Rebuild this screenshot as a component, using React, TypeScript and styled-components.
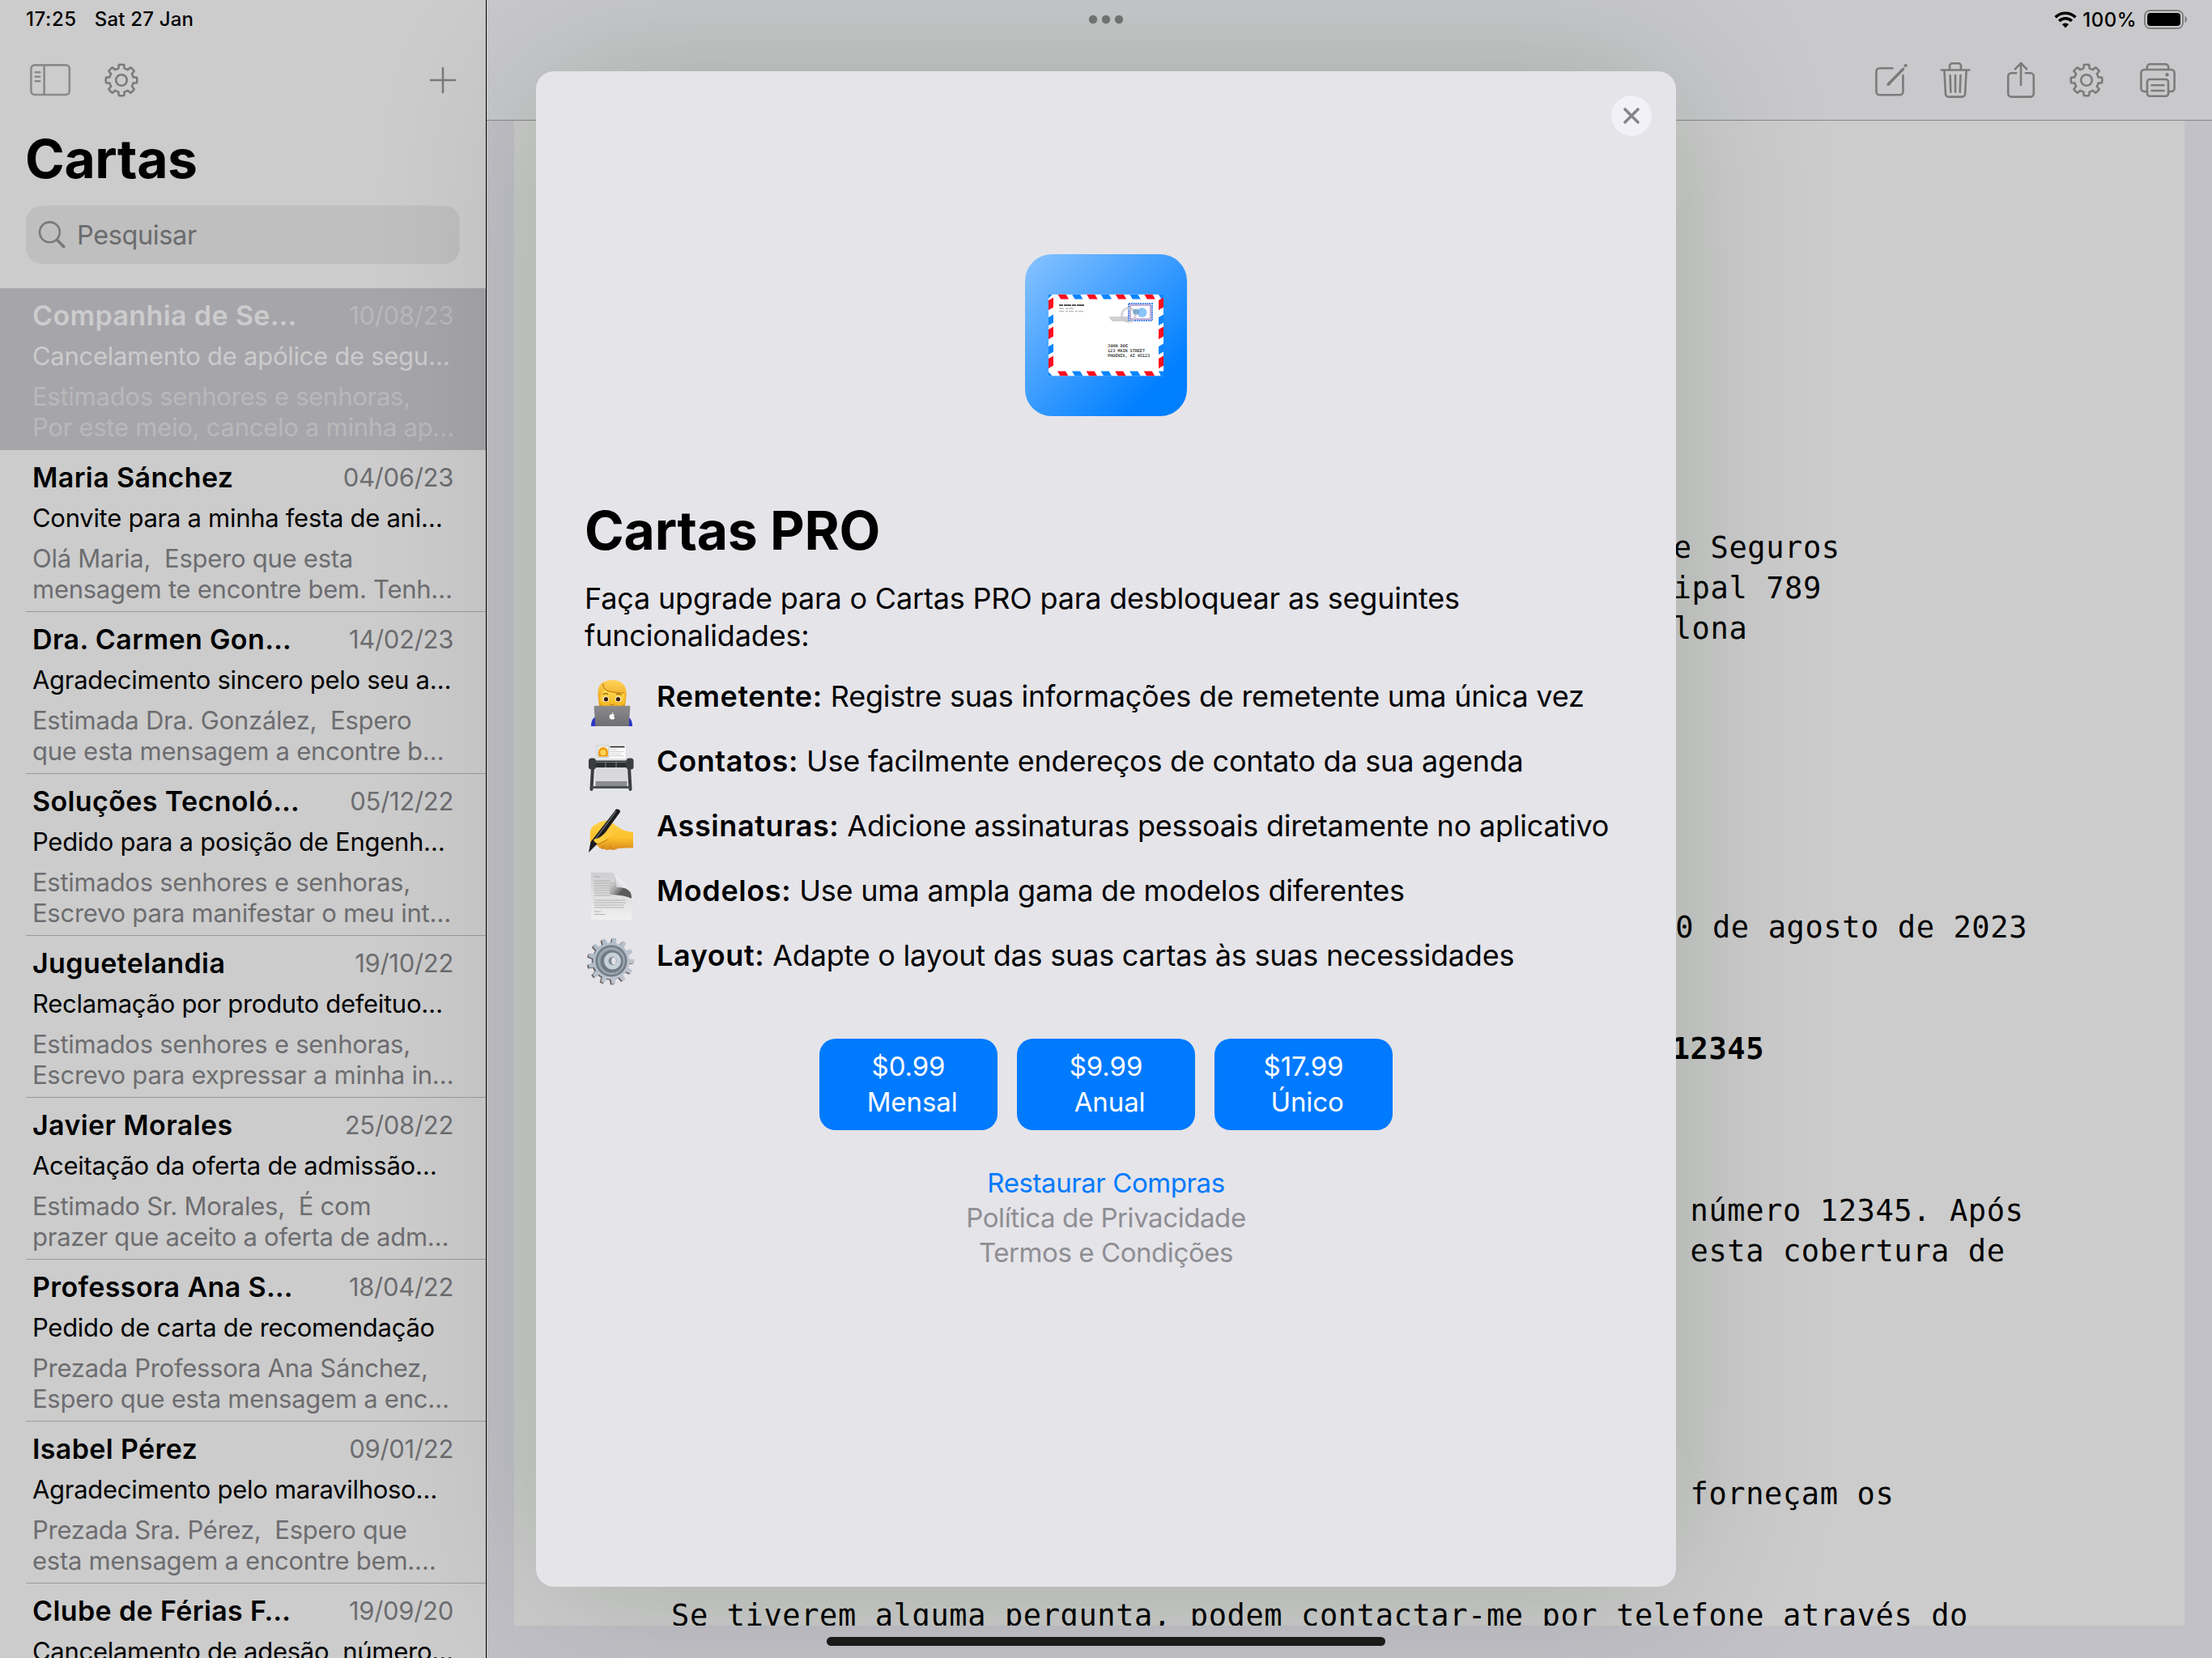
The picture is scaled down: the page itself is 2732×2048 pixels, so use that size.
import React from "react";
import styled, { createGlobalStyle } from "styled-components";

const SANS = `Inter, "Liberation Sans", sans-serif`;
const MONO = `"DejaVu Sans Mono", "Liberation Mono", monospace`;

const Global = createGlobalStyle`
  * { box-sizing: border-box; }
  html, body { margin: 0; padding: 0; background: #ccc; }
  body { font-family: ${SANS}; color: #000; }
  button { font: inherit; border: 0; margin: 0; }
`;

const Screen = styled.div`
  position: relative;
  width: 2732px;
  height: 2048px;
  display: grid;
  grid-template-columns: 600px 1px 1fr;
  overflow: hidden;
`;

/* ---------- sidebar ---------- */

const Sidebar = styled.aside`
  display: flex;
  flex-direction: column;
  height: 2048px;
  overflow: hidden;
  background: #ccc;
`;

const Divider = styled.div`
  background: #000;
`;

const StatusLeft = styled.div`
  display: flex;
  flex: none;
  gap: 22px;
  height: 48px;
  padding-left: 32px;
  font-size: 24px;
  font-weight: 500;
  line-height: 48px;
  letter-spacing: 0.2px;
  white-space: pre;
`;

const Clock = styled.span`
  letter-spacing: 0.6px;
`;

const SideTools = styled.div`
  display: flex;
  flex: none;
  align-items: center;
  height: 101px;
  padding: 0 36px 0 36px;
`;

const Spacer = styled.div`
  flex: 1;
`;

const SideTitle = styled.h1`
  flex: none;
  margin: 0;
  height: 94px;
  padding-left: 31px;
  font-size: 66px;
  font-weight: 700;
  line-height: 94px;
  letter-spacing: -0.4px;
`;

const Search = styled.div`
  display: flex;
  align-items: center;
  gap: 13px;
  flex: none;
  height: 72px;
  margin: 11px 32px 30px;
  padding-left: 14px;
  border-radius: 20px;
  background: #bfbfbf;
  color: #6b6b6d;
  font-size: 32.5px;
  letter-spacing: -0.4px;
`;

const Row = styled.div<{ $selected?: boolean }>`
  flex: none;
  height: 200px;
  padding-left: 32px;
  background: ${(p) => (p.$selected ? "#a6a5aa" : "transparent")};
  --main: ${(p) => (p.$selected ? "#cccccc" : "#000")};
  --dim: ${(p) => (p.$selected ? "#b9b8bb" : "#6d6d70")};
  --line: ${(p) => (p.$selected ? "transparent" : "#9b9b9c")};
`;

const RowBody = styled.div`
  height: 200px;
  padding: 14px 40px 0 8px;
  border-bottom: 1px solid var(--line);
  white-space: pre;
`;

const RowHead = styled.div`
  display: flex;
  justify-content: space-between;
  line-height: 40px;
`;

const Name = styled.div`
  color: var(--main);
  font-size: 34px;
  font-weight: 600;
  letter-spacing: 0.38px;
`;

const DateText = styled.div`
  color: var(--dim);
  font-size: 31px;
  letter-spacing: -0.3px;
`;

const Subject = styled.div`
  margin-top: 10px;
  color: var(--main);
  font-size: 31px;
  line-height: 40px;
  letter-spacing: -0.28px;
`;

const Preview = styled.div`
  margin-top: 11px;
  color: var(--dim);
  font-size: 31px;
  line-height: 38px;
  letter-spacing: -0.26px;
`;

/* ---------- detail ---------- */

const Detail = styled.main`
  display: flex;
  flex-direction: column;
  height: 2048px;
  background: #c2c1c8;
`;

const Header = styled.header`
  flex: none;
  height: 149px;
  border-bottom: 1px solid #868888;
  background: #c9c9cb;
`;

const StatusRight = styled.div`
  display: flex;
  align-items: center;
  height: 48px;
  padding: 0 30px 0 743px;
  font-size: 24px;
  font-weight: 500;
`;

const Percent = styled.span`
  margin: 0 9px 0 7px;
  letter-spacing: 0.5px;
`;

const DetailTools = styled.div`
  display: flex;
  align-items: center;
  justify-content: flex-end;
  height: 101px;
  padding-right: 44px;
`;

const Page = styled.article`
  flex: none;
  height: 1859px;
  margin: 0 34px;
  padding: 503px 0 0 194px;
  overflow: hidden;
  background: #ccc;
  font-family: ${MONO};
  font-size: 37px;
  line-height: 50px;
  letter-spacing: 0.609px;
  white-space: pre;
`;

const Line = styled.div<{ $left?: number; $top?: number; $bold?: boolean }>`
  height: 50px;
  margin-top: ${(p) => p.$top ?? 0}px;
  padding-left: ${(p) => p.$left ?? 0}px;
  font-weight: ${(p) => (p.$bold ? 700 : 400)};
`;

/* ---------- modal ---------- */

const Modal = styled.section`
  position: absolute;
  left: 662px;
  top: 88px;
  width: 1408px;
  height: 1872px;
  display: flex;
  flex-direction: column;
  padding: 0 60px;
  border-radius: 22px;
  background: #e5e4e9;
  box-shadow: 0 0 200px rgba(2, 32, 0, 0.18);
`;

const Close = styled.button`
  position: absolute;
  right: 30px;
  top: 30px;
  display: grid;
  place-items: center;
  width: 50px;
  height: 50px;
  padding: 0;
  border-radius: 50%;
  background: #f2f1f7;
`;

const LogoBox = styled.div`
  display: flex;
  justify-content: center;
  margin: 226px 0 101px;
  height: 200px;
`;

const ModalTitle = styled.h2`
  margin: 0;
  font-size: 66px;
  font-weight: 700;
  line-height: 80px;
  letter-spacing: -0.25px;
`;

const Intro = styled.p`
  margin: 21px 0 12px;
  font-size: 36px;
  line-height: 46px;
  letter-spacing: -0.18px;
`;

const Feature = styled.div`
  display: flex;
  gap: 27px;
  height: 80px;
  padding-left: 2px;
  font-size: 36px;
  line-height: 80px;
  letter-spacing: -0.22px;
  white-space: pre;
`;

const FeatureName = styled.b`
  font-weight: 600;
  letter-spacing: 0.6px;
`;

const Emoji = styled.svg`
  width: 60px;
  height: 62px;
  margin-top: 17px;
  overflow: visible;
`;

const Plans = styled.div`
  display: flex;
  justify-content: center;
  gap: 24px;
  margin-top: 63px;
`;

const Plan = styled.button`
  width: 220px;
  height: 113px;
  padding: 12px 0 13px;
  border-radius: 20px;
  background: #007aff;
  color: #fff;
  font-size: 33px;
  line-height: 44px;
  letter-spacing: -0.1px;
  text-align: center;
  white-space: pre;
`;

const Links = styled.div`
  display: flex;
  flex-direction: column;
  align-items: center;
  margin-top: 44px;
  font-size: 33px;
  line-height: 43px;
  letter-spacing: -0.42px;
  color: #8e8e93;
`;

const Restore = styled.span`
  color: #007aff;
`;

const HomeBar = styled.div`
  position: absolute;
  left: 1021px;
  top: 2022px;
  width: 690px;
  height: 11px;
  border-radius: 6px;
  background: #1a1a1a;
`;

/* ---------- icons ---------- */

const Glyph = styled.svg<{ $ml?: number; $color?: string }>`
  flex: none;
  margin-left: ${(p) => p.$ml ?? 0}px;
  color: ${(p) => p.$color ?? "#7b7b7c"};
  fill: none;
  stroke: currentColor;
  stroke-width: 2.6;
  stroke-linecap: round;
  stroke-linejoin: round;
`;

const cog = (teeth: number, outer: number, root: number, top: number, base: number, cx = 0, cy = 0, turn = 0) => {
  const pts: string[] = [];
  const at = (r: number, deg: number) => {
    const a = ((deg + turn - 90) * Math.PI) / 180;
    return `${(cx + r * Math.cos(a)).toFixed(2)} ${(cy + r * Math.sin(a)).toFixed(2)}`;
  };
  for (let i = 0; i < teeth; i++) {
    const m = (i * 360) / teeth;
    pts.push(`${i ? "L" : "M"}${at(root, m - base)}`, `L${at(outer, m - top)}`, `A${outer} ${outer} 0 0 1 ${at(outer, m + top)}`, `L${at(root, m + base)}`);
    pts.push(`A${root} ${root} 0 0 1 ${at(root, m + 360 / teeth - base)}`);
  }
  return pts.join("") + "Z";
};

const GearIcon = ({ ml }: { ml?: number }) => (
  <Glyph $ml={ml} width="42" height="42" viewBox="-21 -21 42 42">
    <path d={cog(8, 19.3, 15, 9.5, 14)} />
    <circle r="6.8" />
  </Glyph>
);

const SidebarIcon = () => (
  <Glyph width="52" height="42" viewBox="0 0 52 42" $color="#8a8a8b">
    <rect x="2.4" y="2.4" width="47.4" height="36.6" rx="4.5" />
    <path d="M18.6 2.4V39M7.6 11.3h5.6M7.6 16.8h5.6M7.6 22.3h5.6" />
  </Glyph>
);

const PlusIcon = () => (
  <Glyph width="34" height="34" viewBox="0 0 34 34">
    <path d="M17 2v30M2 17h30" />
  </Glyph>
);

const SearchIcon = () => (
  <Glyph width="36" height="36" viewBox="0 0 36 36" $color="#79797b">
    <circle cx="15.4" cy="14.8" r="12.4" />
    <path d="M24.4 24.2l8.4 8.6" strokeWidth="3.6" />
  </Glyph>
);

const ComposeIcon = () => (
  <Glyph width="42" height="44" viewBox="0 0 42 44">
    <path d="M22.5 7.3H6.4a4 4 0 0 0-4 4v25a4 4 0 0 0 4 4h25a4 4 0 0 0 4-4V16" />
    <path d="M17 27.2L35.6 8.2" strokeWidth="3.4" />
    <path d="M16.2 28.4l1.6-3.6 2 2z" strokeWidth="1" fill="currentColor" />
    <path d="M38.4 4.2l.4-.4" strokeWidth="4" />
  </Glyph>
);

const TrashIcon = () => (
  <Glyph $ml={39} width="38" height="46" viewBox="0 0 38 46">
    <path d="M1.8 10.5h34.4M12 10V5.6a3.4 3.4 0 0 1 3.4-3.4h7.2A3.4 3.4 0 0 1 26 5.6V10M5.4 10.8l1.5 29a4 4 0 0 0 4 3.8h16.2a4 4 0 0 0 4-3.8l1.5-29M12.6 17l.7 20.6M19 17v20.6M25.4 17l-.7 20.6" />
  </Glyph>
);

const ShareIcon = () => (
  <Glyph $ml={44} width="36" height="46" viewBox="0 0 36 46">
    <path d="M12.2 14.2H6.2a4 4 0 0 0-4 4v21.4a4 4 0 0 0 4 4h23.6a4 4 0 0 0 4-4V18.2a4 4 0 0 0-4-4h-6M18 29V2.2M10.8 9.4L18 2l7.2 7.4" />
  </Glyph>
);

const PrinterIcon = () => (
  <Glyph $ml={44} width="46" height="44" viewBox="0 0 46 44">
    <path d="M9.8 8.8V6a3.8 3.8 0 0 1 3.8-3.8h18.800A3.8 3.8 0 0 1 36.2 6v2.8M9.500 36H6.4a4 4 0 0 1-4-4V13a4 4 0 0 1 4-4h33.2a4 4 0 0 1 4 4v19a4 4 0 0 1-4 4h-3.1" />
    <rect x="10" y="21" width="26" height="20.8" rx="3" />
    <path d="M15.5 28.2h15M15.5 35h15" />
    <circle cx="34.5" cy="15.2" r="1.2" fill="currentColor" strokeWidth="2" />
  </Glyph>
);

const Dots = () => (
  <svg width="44" height="12" viewBox="0 0 44 12" fill="#747777">
    <circle cx="6" cy="6" r="5.2" /><circle cx="22" cy="6" r="5.2" /><circle cx="38" cy="6" r="5.2" />
  </svg>
);

const Wifi = () => (
  <svg width="28" height="21" viewBox="0 0 28 21" fill="none" stroke="#000" strokeWidth="3.6">
    <path d="M1.6 7.4a17.600 17.6 0 0 1 24.8 0" />
    <path d="M6.2 12a11 11 0 0 1 15.6 0" />
    <path d="M14 20.5l-4.2-4.4a6 6 0 0 1 8.4 0z" fill="#000" stroke="none" />
  </svg>
);

const Battery = () => (
  <svg width="54" height="24" viewBox="0 0 54 24">
    <rect x="1" y="1" width="47" height="22" rx="6.5" fill="none" stroke="#808082" strokeWidth="2" />
    <rect x="4" y="4" width="41" height="16" rx="4" fill="#000" />
    <path d="M50.5 8v8c1.6-.6 2.6-2.2 2.6-4s-1-3.4-2.600-4z" fill="#808082" />
  </svg>
);

const Logo = () => (
  <svg width="200" height="200" viewBox="0 0 200 200">
    <defs>
      <linearGradient id="sky" x1="0" y1="0" x2="1" y2="1">
        <stop offset="0.05" stopColor="#80bfff" />
        <stop offset="0.82" stopColor="#007fff" />
      </linearGradient>
      <clipPath id="env"><rect x="29" y="49.5" width="142" height="101" /></clipPath>
    </defs>
    <rect width="200" height="200" rx="33" fill="url(#sky)" />
    <g clipPath="url(#env)">
      <rect x="29" y="49.5" width="142" height="101" fill="#fff" />
      {[0, 1, 2, 3].map((i) => (
        <g key={i}>
          <path d={`M${40.5 + i * 35.6} 49.500h10l3.5 6h-10z`} fill="#ff0a1e" />
          <path d={`M${58 + i * 35.6} 49.500h10l3.5 6h-10z`} fill="#0a85ff" />
          <path d={`M${40 + i * 35.6} 144.500h10l3.5 6h-10z`} fill="#ff0a1e" />
          <path d={`M${58 + i * 35.6} 144.500h10l3.5 6h-10z`} fill="#0a85ff" />
        </g>
      ))}
      {[0, 1, 2].map((i) => (
        <g key={i}>
          <path d={`M29 ${57 + i * 36}l6-3.5v12l-6 3.5z`} fill="#ff0a1e" />
          <path d={`M29 ${78 + i * 36}l6-3.5v10l-6 3.5z`} fill={i < 2 ? "#0a85ff" : "none"} />
          <path d={`M165 ${57 + i * 36}l6-3.5v12l-6 3.5z`} fill="#ff0a1e" />
          <path d={`M165 ${78 + i * 36}l6-3.5v10l-6 3.5z`} fill={i < 2 ? "#0a85ff" : "none"} />
        </g>
      ))}
      <path d="M29 49.5h5l-5 5zM29 150.500v-5l5 5zM171 49.500v5l-5-5zM171 150.500h-5l5-5z" fill="#0a85ff" />
    </g>
    <path d="M42 63h32" stroke="#555" strokeWidth="2" strokeDasharray="5 1 9 1" />
    <path d="M42 67h20M42 70.500h31" stroke="#bbb" strokeWidth="1.6" strokeDasharray="6 2 3 1" />
    <path d="M104 78h26M107 82h22M105 80h30" stroke="#d0d0d0" strokeWidth="2" />
    <rect x="128" y="61" width="29" height="21" fill="#fff" stroke="#4b86e8" strokeWidth="2" strokeDasharray="2 .8" />
    <rect x="130" y="63" width="25" height="17" fill="#fff" stroke="#8a5fb0" strokeWidth="1" />
    <circle cx="128" cy="75" r="8.5" fill="none" stroke="#c4c4c8" strokeWidth="3" opacity=".7" />
    <circle cx="144.5" cy="72" r="6" fill="#8cc4f8" />
    <ellipse cx="137" cy="71" rx="4" ry="3.500" fill="#6d9bc4" opacity=".8" />
    <g fontFamily={MONO} fontWeight="700" fontSize="5.2" fill="#444">
      <text x="102" y="114.5" textLength="25">JOHN DOE</text>
      <text x="102" y="120.7" textLength="46">123 MAIN STREET</text>
      <text x="102" y="127" textLength="52">PHOENIX, AZ 45123</text>
    </g>
  </svg>
);

const PersonEmoji = () => (
  <Emoji viewBox="0 -2 60 62">
    <defs>
      <linearGradient id="hair" x1="0" y1="0" x2="0" y2="1"><stop offset="0" stopColor="#ffd45a" /><stop offset="1" stopColor="#e89a10" /></linearGradient>
      <linearGradient id="skin" x1="0" y1="0" x2="0" y2="1"><stop offset="0" stopColor="#ffdc50" /><stop offset="1" stopColor="#f5b21c" /></linearGradient>
      <linearGradient id="lid" x1="0" y1="0" x2="0" y2="1"><stop offset="0" stopColor="#8b8b8e" /><stop offset="1" stopColor="#707073" /></linearGradient>
    </defs>
    <path d="M6 58c0-6 2-10 6-12h39c4 2 6 6 6 12z" fill="#2b36c4" />
    <path d="M14.5 20C13 7 20 1 32 1s19 7 17.500 20l-1.500 12H16z" fill="url(#hair)" />
    <path d="M16.500 23c2-4 4-8 5.500-10 6 4 16 5 24.500 4.500 1.500 4 1.500 8 .8 12-2 2-5 4-7 5H24c-4-1-7.500-5-7.500-11.500z" fill="url(#skin)" />
    <path d="M21 5c-2 8 8 12 25.500 12" fill="none" stroke="#c97f10" strokeWidth="1.2" />
    <ellipse cx="24.3" cy="24.7" rx="3.7" ry="3.4" fill="#fff" /><ellipse cx="39.7" cy="24.7" rx="3.7" ry="3.4" fill="#fff" />
    <circle cx="24.5" cy="24.7" r="2.700" fill="#3a1f08" /><circle cx="39.5" cy="24.7" r="2.700" fill="#3a1f08" />
    <path d="M20.500 19q3.500-2.200 6.500-.6M37 18.700q3.500-1.500 6.500.8" fill="none" stroke="#9a6413" strokeWidth="1.2" />
    <path d="M29 30.8q3 1.500 6 0" fill="none" stroke="#c07c14" strokeWidth="1.2" />
    <path d="M11 32.7h42a1.500 1.5 0 0 1 1.4 1.6L52.5 58h-41L9.6 34.300A1.500 1.5 0 0 1 11 32.700z" fill="url(#lid)" />
    <path d="M31.8 43.500c2-1.200 3.4.2 3.2.6-1.400 1-1 2.700.2 3.3-.6 2-1.800 2.600-3.400 2-1.600.6-3.400-.8-3.200-3.400.2-2.200 1.800-3 3.200-2.500zm0-.8c0-1.200.6-2 1.600-2.200 0 1.200-.6 2-1.600 2.200z" fill="#fff" />
  </Emoji>
);

const RolodexEmoji = () => (
  <Emoji viewBox="0 -2 60 62">
    <rect x="12.7" y=".3" width="36.6" height="18" fill="#fbfbfb" stroke="#d0d0d3" strokeWidth=".6" />
    <rect x="14" y="2" width="14" height="14.5" fill="#f7eedc" stroke="#a5bccb" strokeWidth=".8" />
    <path d="M15.500 15.500C14 9 16 4 21 4s7 5 5.500 11.500z" fill="#f09a12" />
    <circle cx="21" cy="10.5" r="3.600" fill="#ffd65c" />
    <path d="M29.500 3.500h18" stroke="#333" strokeWidth="1.8" />
    <path d="M29.500 7h9M29.500 9.500h17M29.500 12h14M29.500 14.500h17" stroke="#cfcfd2" strokeWidth="1" />
    <path d="M11.500 28h39v20h-39z" fill="#d9d9dc" />
    <path d="M11.500 46h39v6h-39z" fill="#8a8c8e" />
    <path d="M8 29L6.500 56M53 29l1.500 27" stroke="#3b3d40" strokeWidth="4" strokeLinecap="round" />
    <path d="M6.500 53.500h48" stroke="#4c4f52" strokeWidth="3" />
    <rect x="8" y="20.5" width="45" height="8.5" fill="#2c2e30" />
    <path d="M10 22.500h41" stroke="#77797c" strokeWidth="1.2" />
    <rect x="3" y="17.5" width="9" height="14" rx="3.5" fill="#3a3c3e" /><rect x="49.5" y="17.5" width="9" height="14" rx="3.5" fill="#3a3c3e" />
    <path d="M24 20.500v8.500M37 20.500v8.500" stroke="#66686b" strokeWidth="1.6" />
  </Emoji>
);

const WritingEmoji = () => (
  <Emoji viewBox="0 -2 60 62">
    <defs><linearGradient id="hand" x1="0" y1="0" x2="0" y2="1"><stop offset="0" stopColor="#ffd24a" /><stop offset=".6" stopColor="#fcc02c" /><stop offset="1" stopColor="#d98a1c" /></linearGradient></defs>
    <path d="M5 40C4.500 30 5 24 9 21c4-3 10-6 16-6.500 6 0 8 4 14 8 6 4 12 6 19 6.500V48c-8 1-14 0-20 1.500-3 2-7 1.500-9 .5-3 1.500-5 1-7-.5-4 .5-7-2-8-4.500-4 .5-8-1-9-5z" fill="url(#hand)" />
    <path d="M35.500 2.500c1-3.500 7-2 6.500 1.500L13 44 3 54l2.500-13z" fill="#1c1c20" />
    <path d="M37 3L11 38" stroke="#7a7a80" strokeWidth="1.2" />
    <path d="M9 38c5-1 9-3 13-7 5-4 10-4 12-1-3 4-8 6-11 9-4 5-12 6-14-1z" fill="#ffcb3c" />
    <path d="M13 44c6-1 9-5 14-6M20 50l2-5M29 50l1-4" stroke="#c98016" strokeWidth="1.2" fill="none" />
  </Emoji>
);

const PageEmoji = () => (
  <Emoji viewBox="0 -2 60 62">
    <defs>
      <linearGradient id="sheet" x1="0" y1="0" x2="0" y2="1"><stop offset="0" stopColor="#cfcfd1" /><stop offset="1" stopColor="#f0f0f1" /></linearGradient>
      <linearGradient id="curl" x1="0" y1="1" x2="1" y2="0"><stop offset=".1" stopColor="#bdbdc0" /><stop offset=".5" stopColor="#ececee" /><stop offset="1" stopColor="#f8f8f9" /></linearGradient>
      <linearGradient id="shade" x1=".1" y1=".2" x2=".9" y2=".9"><stop offset=".2" stopColor="#777" stopOpacity="0" /><stop offset=".7" stopColor="#444" stopOpacity=".85" /></linearGradient>
    </defs>
    <path d="M6 -1.300h24c6 0 7 5 7.500 17 12 1 18 4 18.500 13V57H6z" fill="url(#sheet)" />
    <path d="M24 -1.300h6c6 0 7 5 7.500 17 12 1 18 4 18.500 13v2C46 26 36 27 30 26z" fill="url(#shade)" />
    <path d="M32-1.200C40 4 50 14 55.500 24 50 17 44 17 37.500 17 38 8 37 1 32-1.200z" fill="url(#curl)" />
    <path d="M10 4h8M10 9h20M10 12h23M10 15h22M10 18h24M10 21h22M10 24h25M10 27h20M10 33h38M10 36h39M10 39h36M10 42h37M10 47h8M10 50.500h13" stroke="#a9a9ac" strokeWidth=".9" />
  </Emoji>
);

const GearEmoji = () => (
  <Emoji viewBox="0 -2 60 62">
    <defs><linearGradient id="steel" x1="0" y1="0" x2="1" y2="1"><stop offset="0" stopColor="#a9bac6" /><stop offset="1" stopColor="#c3c6d2" /></linearGradient></defs>
    <path d={cog(13, 28.5, 22.5, 4.5, 7.5, 29.3, 29, 8)} fill="#6d6360" />
    <path d={cog(13, 28.5, 22.5, 4.5, 7.5, 31, 28, 8)} fill="url(#steel)" />
    <circle cx="31" cy="28" r="19.5" fill="#717c84" />
    <circle cx="31" cy="28" r="17" fill="#9aa6ae" />
    <circle cx="31.5" cy="28.5" r="14" fill="#6f7b83" />
    <circle cx="32.5" cy="28" r="10.5" fill="#c6d0d8" />
    <circle cx="32.5" cy="28" r="5" fill="#7e8b96" />
    <ellipse cx="34" cy="28" rx="2.8" ry="4.3" fill="#e5e4e9" />
  </Emoji>
);

/* ---------- data ---------- */

type Letter = { name: string; date: string; subject: string; preview: string[] };

const letters: Letter[] = [
  { name: "Companhia de Se…", date: "10/08/23", subject: "Cancelamento de apólice de segu…", preview: ["Estimados senhores e senhoras,", "Por este meio, cancelo a minha ap…"] },
  { name: "Maria Sánchez", date: "04/06/23", subject: "Convite para a minha festa de ani…", preview: ["Olá Maria,  Espero que esta", "mensagem te encontre bem. Tenh…"] },
  { name: "Dra. Carmen Gon…", date: "14/02/23", subject: "Agradecimento sincero pelo seu a…", preview: ["Estimada Dra. González,  Espero", "que esta mensagem a encontre b…"] },
  { name: "Soluções Tecnoló…", date: "05/12/22", subject: "Pedido para a posição de Engenh…", preview: ["Estimados senhores e senhoras,", "Escrevo para manifestar o meu int…"] },
  { name: "Juguetelandia", date: "19/10/22", subject: "Reclamação por produto defeituo…", preview: ["Estimados senhores e senhoras,", "Escrevo para expressar a minha in…"] },
  { name: "Javier Morales", date: "25/08/22", subject: "Aceitação da oferta de admissão…", preview: ["Estimado Sr. Morales,  É com", "prazer que aceito a oferta de adm…"] },
  { name: "Professora Ana S…", date: "18/04/22", subject: "Pedido de carta de recomendação", preview: ["Prezada Professora Ana Sánchez,", "Espero que esta mensagem a enc…"] },
  { name: "Isabel Pérez", date: "09/01/22", subject: "Agradecimento pelo maravilhoso…", preview: ["Prezada Sra. Pérez,  Espero que", "esta mensagem a encontre bem.…"] },
  { name: "Clube de Férias F…", date: "19/09/20", subject: "Cancelamento de adesão, número…", preview: [] },
];

const features = [
  { icon: <PersonEmoji />, title: "Remetente:", text: "Registre suas informações de remetente uma única vez" },
  { icon: <RolodexEmoji />, title: "Contatos:", text: "Use facilmente endereços de contato da sua agenda" },
  { icon: <WritingEmoji />, title: "Assinaturas:", text: "Adicione assinaturas pessoais diretamente no aplicativo" },
  { icon: <PageEmoji />, title: "Modelos:", text: "Use uma ampla gama de modelos diferentes" },
  { icon: <GearEmoji />, title: "Layout:", text: "Adapte o layout das suas cartas às suas necessidades" },
];

const plans = [["$0.99", "Mensal"], ["$9.99", "Anual"], ["$17.99", "Único"]];

/* advance width of one character of the letter's typeface */
const PITCH = 22.883;

export default function App() {
  return (
    <>
      <Global />
      <Screen>
        <Sidebar>
          <StatusLeft><Clock>17:25</Clock><span>Sat 27 Jan</span></StatusLeft>
          <SideTools>
            <SidebarIcon />
            <GearIcon ml={41} />
            <Spacer />
            <PlusIcon />
          </SideTools>
          <SideTitle>Cartas</SideTitle>
          <Search><SearchIcon />Pesquisar</Search>
          {letters.map((l, i) => (
            <Row key={l.name} $selected={i === 0}>
              <RowBody>
                <RowHead><Name>{l.name}</Name><DateText>{l.date}</DateText></RowHead>
                <Subject>{l.subject}</Subject>
                <Preview>{l.preview.map((t) => <div key={t}>{t}</div>)}</Preview>
              </RowBody>
            </Row>
          ))}
        </Sidebar>
        <Divider />
        <Detail>
          <Header>
            <StatusRight>
              <Dots />
              <Spacer />
              <Wifi />
              <Percent>100%</Percent>
              <Battery />
            </StatusRight>
            <DetailTools>
              <ComposeIcon />
              <TrashIcon />
              <ShareIcon />
              <GearIcon ml={42} />
              <PrinterIcon />
            </DetailTools>
          </Header>
          <Page>
            <Line $left={986}>Companhia de Seguros</Line>
            <Line $left={986}>Calle Principal 789</Line>
            <Line $left={986}>08001 Barcelona</Line>
            <Line $top={319} $left={1675 - 20 * PITCH}>10 de agosto de 2023</Line>
            <Line $top={100} $left={54 * PITCH} $bold>12345</Line>
            <Line $top={150} $left={55 * PITCH}>número 12345. Após</Line>
            <Line $left={55 * PITCH}>esta cobertura de</Line>
            <Line $top={250} $left={55 * PITCH}>forneçam os</Line>
            <Line $top={100}>Se tiverem alguma pergunta, podem contactar-me por telefone através do</Line>
          </Page>
        </Detail>
        <Modal>
          <Close aria-label="Fechar">
            <svg width="24" height="24" viewBox="-12 -12 24 24" stroke="#86858b" strokeWidth="3.6" strokeLinecap="round"><path d="M-8-8L8 8M8-8L-8 8" /></svg>
          </Close>
          <LogoBox><Logo /></LogoBox>
          <ModalTitle>Cartas PRO</ModalTitle>
          <Intro>Faça upgrade para o Cartas PRO para desbloquear as seguintes<br />funcionalidades:</Intro>
          {features.map((f) => (
            <Feature key={f.title}>{f.icon}<span><FeatureName>{f.title}</FeatureName> {f.text}</span></Feature>
          ))}
          <Plans>
            {plans.map(([price, term]) => (
              <Plan key={term}><div>{price}</div><div>{" " + term}</div></Plan>
            ))}
          </Plans>
          <Links>
            <Restore>Restaurar Compras</Restore>
            <span>Política de Privacidade</span>
            <span>Termos e Condições</span>
          </Links>
        </Modal>
        <HomeBar />
      </Screen>
    </>
  );
}
